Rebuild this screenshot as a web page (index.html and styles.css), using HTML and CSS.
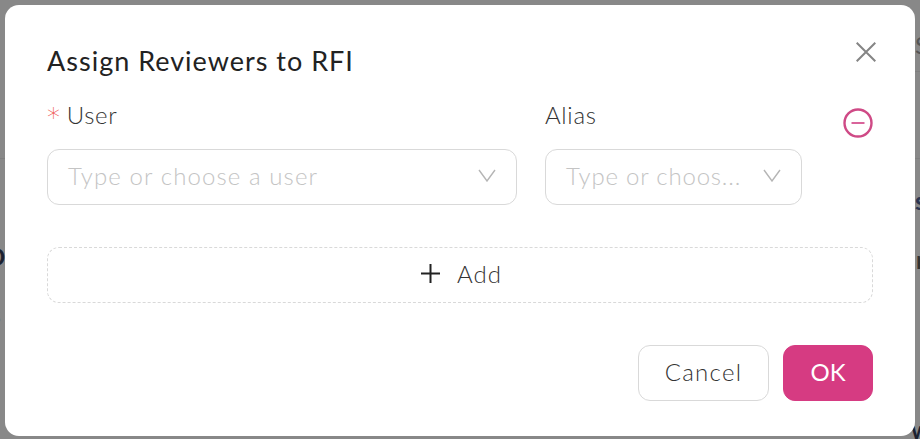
FILE: index.html
```html
<!DOCTYPE html>
<html lang="en">
<head>
  <meta charset="UTF-8" />
  <title>Assign Reviewers to RFI</title>
  <link rel="stylesheet" href="styles.css">
</head>
<body>
  <!-- page under the dialog, only the edges show -->
  <div class="under">
    <div class="under-line line-a"></div>
    <div class="under-line line-b"></div>
    <span class="peek peek-1">D</span>
    <span class="peek peek-2">s</span>
    <span class="peek peek-3">S</span>
    <span class="peek peek-4">s</span>
    <span class="peek peek-5">r</span>
    <span class="peek peek-6">w</span>
  </div>

  <div class="backdrop">
    <div class="modal">
      <div class="modal-head">
        <h2>Assign Reviewers to RFI</h2>
        <button class="close" type="button" aria-label="Close">
          <svg width="20" height="20" viewBox="0 0 20 20"><path d="M.7.7 19.3 19.3M19.3.7.7 19.3" fill="none" stroke="#858585" stroke-width="2"/></svg>
        </button>
      </div>

      <div class="row">
        <div class="field field-user">
          <label><span class="req">*</span>User</label>
          <div class="select">
            <span class="placeholder">Type or choose a user</span>
            <svg class="chev" width="18" height="13" viewBox="0 0 18 13"><path d="M1 1 9 12 17 1" fill="none" stroke="#b5b5b5" stroke-width="1.4"/></svg>
          </div>
        </div>
        <div class="field field-alias">
          <label>Alias</label>
          <div class="select">
            <span class="placeholder">Type or choos...</span>
            <svg class="chev" width="18" height="13" viewBox="0 0 18 13"><path d="M1 1 9 12 17 1" fill="none" stroke="#b5b5b5" stroke-width="1.4"/></svg>
          </div>
        </div>
        <svg class="remove" width="30" height="30" viewBox="0 0 30 30"><circle cx="15" cy="15" r="13.5" fill="none" stroke="#cf4a86" stroke-width="2.4"/><path d="M8.500 15H21.500" stroke="#d9649b" stroke-width="2"/></svg>
      </div>

      <button class="add" type="button">
        <svg width="19" height="19" viewBox="0 0 19 19"><path d="M9.500 0V19M0 9.500H19" stroke="#222" stroke-width="2"/></svg>
        <span>Add</span>
      </button>

      <div class="actions">
        <button class="btn" type="button">Cancel</button>
        <button class="btn btn-primary" type="button">OK</button>
      </div>
    </div>
  </div>
</body>
</html>
```

FILE: styles.css
```css
html, body {
  margin: 0;
  height: 100%;
}

body {
  font-family: "Lato", "Open Sans", sans-serif;
  background-color: #888;
  overflow: hidden;
}

.under-line {
  position: absolute;
  height: 1px;
  background: #7f7f7f;
}

.line-a {
  top: 71px;
  left: 915px;
  right: 0;
}

.line-b {
  top: 158px;
  left: 0;
  right: 0;
}

.peek {
  position: absolute;
  font-size: 24px;
  line-height: 24px;
  font-weight: 700;
  color: #1c2230;
}

.peek-1 { left: -13px; top: 245px; }
.peek-2 { left: -10px; top: 303px; color: #2b3550; }
.peek-3 { left: 915px; top: 33px; color: #555; font-weight: 400; }
.peek-4 { left: 915px; top: 189px; color: #2b3550; }
.peek-5 { left: 916px; top: 248px; color: #333; }
.peek-6 { left: 911px; top: 418px; color: #1c2230; }

.backdrop {
  position: relative;
  padding: 5px;
}

.modal {
  box-sizing: border-box;
  width: 910px;
  height: 431px;
  padding: 36px 42px 35px;
  background: #fff;
  border-radius: 14px;
  display: flex;
  flex-direction: column;
}

.modal-head {
  display: flex;
  justify-content: space-between;
  align-items: flex-start;
  height: 56px;
}

h2 {
  margin: 0;
  font-size: 27px;
  line-height: 40px;
  font-weight: 400;
  letter-spacing: 1px;
  color: #222;
}

.close {
  border: none;
  background: none;
  padding: 0;
  margin: 1px -3px 0 0;
  height: 20px;
}

.row {
  display: flex;
  gap: 28px;
}

.field-user {
  width: 470px;
}

.field-alias {
  width: 257px;
}

label {
  display: flex;
  align-items: center;
  height: 30px;
  font-size: 24px;
  font-weight: 300;
  line-height: 30px;
  letter-spacing: .7px;
  color: #333;
  margin-top: 3px;
  margin-bottom: 19px;
}

.req {
  font-family: "DejaVu Sans", sans-serif;
  font-size: 26px;
  line-height: 30px;
  color: #ef5350;
  margin: 6px 6px 0 0;
}

.select {
  box-sizing: border-box;
  height: 56px;
  border: 1px solid #d9d9d9;
  border-radius: 12px;
  padding: 0 20px 3px;
  display: flex;
  align-items: center;
  justify-content: space-between;
}

.placeholder {
  font-size: 24px;
  font-weight: 300;
  letter-spacing: 1.100px;
  color: #c4c4c4;
  white-space: nowrap;
}

.field-alias .placeholder {
  letter-spacing: .8px;
}

.remove {
  margin: 11px 0 0 13px;
}

.add {
  box-sizing: border-box;
  width: 100%;
  height: 56px;
  margin-top: 42px;
  padding: 0 0 4px 3px;
  border: 1px dashed #d9d9d9;
  border-radius: 12px;
  background: #fff;
  display: flex;
  align-items: center;
  justify-content: center;
  gap: 17px;
  font-family: inherit;
  font-size: 24px;
  font-weight: 300;
  letter-spacing: 1px;
  color: #333;
}

.actions {
  display: flex;
  justify-content: flex-end;
  gap: 14px;
  margin-top: auto;
}

.btn {
  box-sizing: border-box;
  height: 56px;
  width: 131px;
  padding: 0 0 4px;
  border: 1px solid #d9d9d9;
  border-radius: 12px;
  background: #fff;
  font-family: inherit;
  font-size: 24px;
  font-weight: 300;
  letter-spacing: 1.300px;
  color: #333;
}

.btn-primary {
  width: 90px;
  background: #d63b82;
  border-color: #d63b82;
  color: #fff;
  font-weight: 400;
  letter-spacing: 0;
}
```
